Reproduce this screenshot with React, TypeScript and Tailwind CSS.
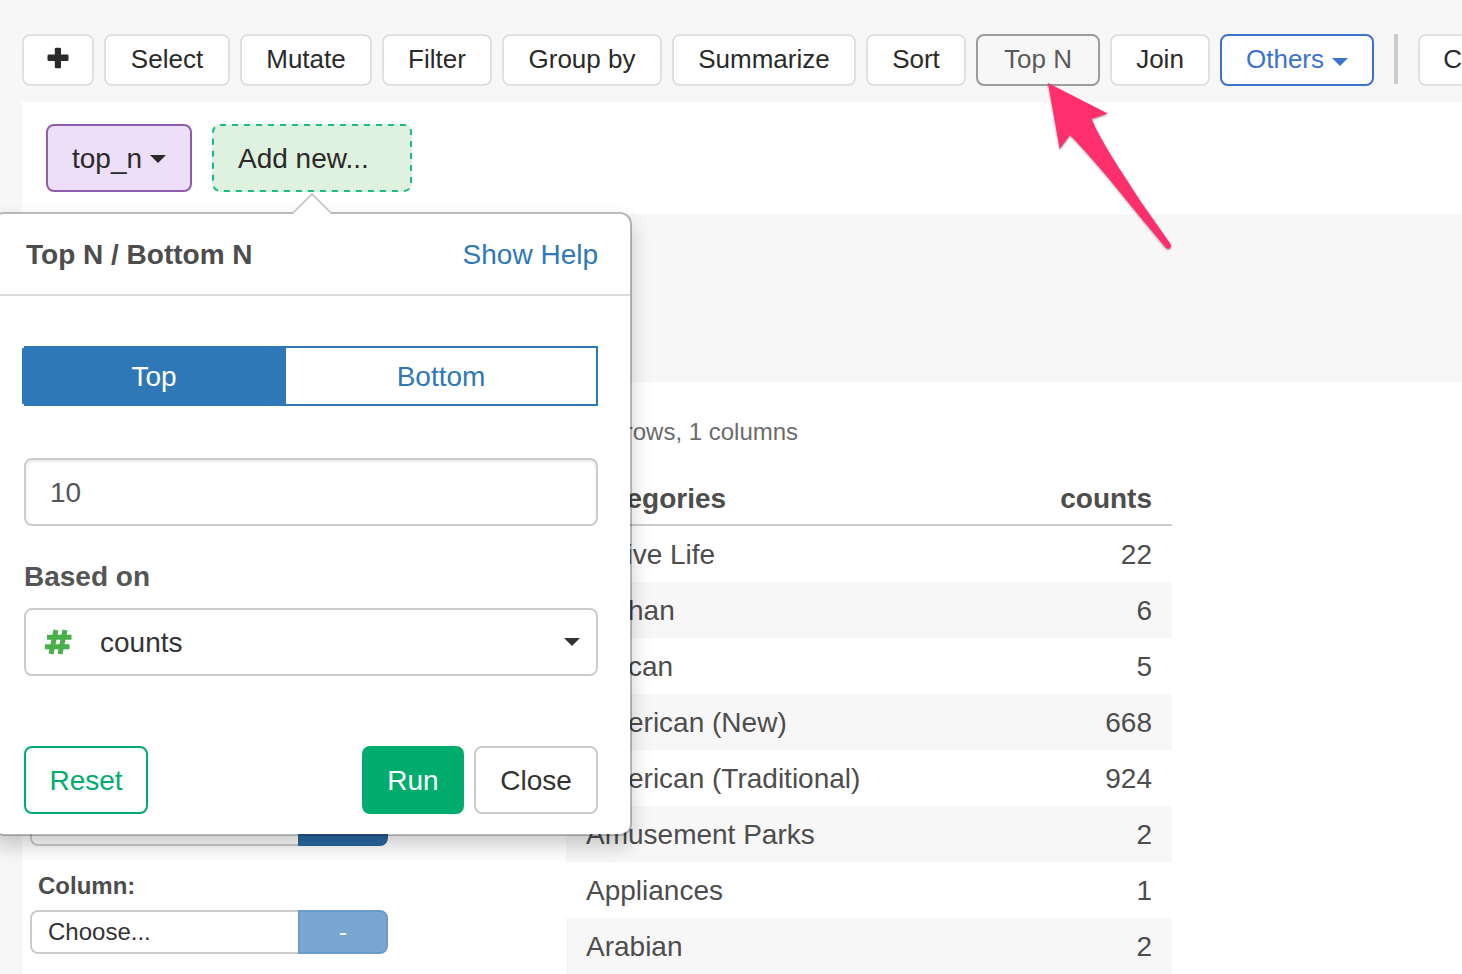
import type { ReactNode } from "react";

function Caret({ className = "" }: { className?: string }) {
  return (
    <svg viewBox="0 0 16 8" className={`h-2 w-4 shrink-0 ${className}`} aria-hidden="true">
      <path d="M0 0h16L8 8z" fill="currentColor" />
    </svg>
  );
}

function PlusIcon() {
  return (
    <svg viewBox="0 0 22 22" className="mb-0.5 h-[22px] w-[22px]" aria-hidden="true">
      <rect x="0.5" y="7.6" width="21" height="6.4" rx="1.2" fill="currentColor" />
      <rect x="7.8" y="0.8" width="6.2" height="20.4" rx="1.2" fill="currentColor" />
    </svg>
  );
}

function HashIcon() {
  return (
    <svg
      viewBox="0 0 28 26"
      className="pointer-events-none absolute top-[21px] left-5 h-[26px] w-7 text-[#47b04b]"
      aria-hidden="true"
    >
      <path
        d="M12 1L7 25M21 1L16 25M3 8.200H27.500M1 17.800H25.500"
        fill="none"
        stroke="currentColor"
        strokeWidth="5"
      />
    </svg>
  );
}

function Arrow() {
  return (
    <svg
      viewBox="0 0 130 172"
      className="pointer-events-none absolute top-12 left-[70px] z-20 h-[172px] w-[130px] overflow-visible drop-shadow-[0_1px_1px_rgba(0,0,0,0.4)]"
      aria-hidden="true"
    >
      <path
        d="M2 1L61.700 31.500L45.700 37C50 49 66 75 75 89L94 118.500L124.500 162C126.500 165.500 122.500 168.500 119.500 165.500L90.500 130.500L60.700 94C46 77 34 63 24 53.300L13.700 67Z"
        fill="#ff2e6c"
      />
    </svg>
  );
}

const toolBase =
  "flex h-[52px] shrink-0 items-center justify-center rounded-lg border-2 pb-0.5 text-[26px] leading-8";
const toolPlain = "border-[#e0e0e0] bg-white text-[#2a2a2a]";

function Tool({ width, children }: { width: string; children: ReactNode }) {
  return (
    <button type="button" className={`${toolBase} ${toolPlain} ${width}`}>
      {children}
    </button>
  );
}

function Toolbar() {
  return (
    <div className="flex gap-2.5 pt-[34px] pb-4 pl-[22px]">
      <button type="button" aria-label="Add step" className={`${toolBase} ${toolPlain} w-[72px]`}>
        <PlusIcon />
      </button>
      <Tool width="w-[126px]">Select</Tool>
      <Tool width="w-[132px]">Mutate</Tool>
      <Tool width="w-[110px]">Filter</Tool>
      <Tool width="w-[160px]">Group by</Tool>
      <Tool width="w-[184px]">Summarize</Tool>
      <Tool width="w-[100px]">Sort</Tool>
      <div className="relative shrink-0">
        <button type="button" className={`${toolBase} w-[124px] border-[#9b9b9b] bg-[#f7f7f7] text-[#5a5a5a]`}>
          Top N
        </button>
        <Arrow />
      </div>
      <Tool width="w-[100px]">Join</Tool>
      <button type="button" className={`${toolBase} w-[154px] gap-2 border-[#3c71d0] bg-white text-[#3c71d0]`}>
        Others
        <Caret className="mt-1.5" />
      </button>
      <div className="mx-2.5 h-[50px] w-1 shrink-0 bg-[#cccccc]" />
      <Tool width="w-[140px]">Custom</Tool>
    </div>
  );
}

function Popover() {
  return (
    <div className="absolute top-[88px] left-1/2 z-10 w-[640px] -translate-x-1/2 rounded-xl border-2 border-black/25 bg-white bg-clip-padding text-[28px] leading-10 shadow-[0_10px_20px_rgba(0,0,0,0.2)]">
      <svg viewBox="0 0 42 22" className="absolute -top-[21px] left-1/2 h-[22px] w-[42px] -translate-x-1/2" aria-hidden="true">
        <path d="M0 22L21 1L42 22Z" fill="#fff" />
        <path d="M1 21L21 1L41 21" fill="none" stroke="#bcbcbc" strokeWidth="1.5" />
      </svg>
      <div className="flex items-center justify-between border-b-2 border-[#dddddd] px-8 pt-[21px] pb-[19px]">
        <h2 className="font-bold text-[#4d4d4d]">Top N / Bottom N</h2>
        <a href="#help" className="text-[#2f78b7]">
          Show Help
        </a>
      </div>
      <form className="pt-[50px] pr-8 pb-5 pl-[30px]" onSubmit={(e) => e.preventDefault()}>
        <div className="flex h-[60px] border-2 border-[#2f78b7]">
          <button type="button" className="-ml-1 w-[264px] bg-[#2f78b7] pt-0.5 text-white">
            Top
          </button>
          <button type="button" className="flex-1 pt-0.5 text-[#2f78b7]">
            Bottom
          </button>
        </div>
        <input
          aria-label="Number of rows"
          defaultValue="10"
          className="mt-[52px] block h-[68px] w-full rounded-lg border-2 border-[#cccccc] px-6 pt-0.5 text-[#555555] shadow-[inset_0_2px_3px_rgba(0,0,0,0.08)]"
        />
        <label htmlFor="based-on" className="mt-[31px] block font-bold text-[#555555]">
          Based on
        </label>
        <div className="relative mt-[11px]">
          <HashIcon />
          <select
            id="based-on"
            className="block h-[68px] w-full appearance-none rounded-lg border-2 border-[#cccccc] bg-white pt-0.5 pl-[74px] text-[#333333]"
          >
            <option>counts</option>
          </select>
          <Caret className="pointer-events-none absolute top-[30px] right-[18px] text-[#333333]" />
        </div>
        <div className="mt-[70px] flex h-[68px] gap-2.5">
          <button type="button" className="mr-auto w-[124px] rounded-lg border-2 border-[#00ad6e] pt-0.5 text-[#00ad6e]">
            Reset
          </button>
          <button type="submit" className="w-[102px] rounded-lg bg-[#00ad6e] pt-0.5 text-white">
            Run
          </button>
          <button type="button" className="w-[124px] rounded-lg border-2 border-[#cccccc] pt-0.5 text-[#333333]">
            Close
          </button>
        </div>
      </form>
    </div>
  );
}

function Steps() {
  return (
    <div className="ml-[22px] flex gap-5 bg-white px-6 py-[22px] text-[28px] leading-10 text-[#2a2a2a]">
      <button
        type="button"
        className="flex h-[68px] w-[146px] items-center justify-center gap-2 rounded-lg border-2 border-[#8e5db0] bg-[#eddff7] pt-0.5"
      >
        top_n
        <Caret />
      </button>
      <div className="relative">
        <button type="button" className="relative h-[68px] w-[200px] rounded-lg bg-[#dff2df] pt-0.5 pl-[26px] text-left">
          Add new...
          <svg
            className="absolute inset-px h-[calc(100%-2px)] w-[calc(100%-2px)] overflow-visible"
            aria-hidden="true"
          >
            <rect
              width="100%"
              height="100%"
              rx="7"
              fill="none"
              stroke="#1abb84"
              strokeWidth="2"
              strokeDasharray="6 6"
            />
          </svg>
        </button>
        <Popover />
      </div>
    </div>
  );
}

function ColumnPicker({ label, action, tone }: { label: ReactNode; action: string; tone: string }) {
  return (
    <div>
      {label}
      <div className="flex h-11 w-[358px]">
        <select
          id={action === "-" ? "column" : undefined}
          aria-label={label ? undefined : "First column"}
          className="min-w-0 flex-1 appearance-none rounded-l-lg border-2 border-r-0 border-[#cccccc] bg-white px-4 text-[#333333]"
        >
          {label ? <option>Choose...</option> : <option></option>}
        </select>
        <button
          type="button"
          aria-label={action === "-" ? undefined : "Add column"}
          className={`w-[90px] rounded-r-lg border-2 text-white ${tone}`}
        >
          {action}
        </button>
      </div>
    </div>
  );
}

const rows: [string, number][] = [
  ["Active Life", 22],
  ["Afghan", 6],
  ["African", 5],
  ["American (New)", 668],
  ["American (Traditional)", 924],
  ["Amusement Parks", 2],
  ["Appliances", 1],
  ["Arabian", 2],
];

function Results() {
  return (
    <section className="w-[606px] shrink-0 pt-[34px] text-[#4d4d4d]">
      <p className="px-3 text-2xl leading-8 text-[#6b6b6b]">147 rows, 1 columns</p>
      <table className="mt-6 w-full border-separate border-spacing-0 text-[28px] leading-10">
        <thead>
          <tr>
            <th className="h-[54px] border-b-2 border-[#cccccc] px-5 pt-0.5 text-left font-bold">categories</th>
            <th className="h-[54px] border-b-2 border-[#cccccc] px-5 pt-0.5 text-right font-bold">counts</th>
          </tr>
        </thead>
        <tbody>
          {rows.map(([name, count]) => (
            <tr key={name} className="even:bg-[#f7f7f7]">
              <td className="h-14 px-5 pt-0.5">{name}</td>
              <td className="h-14 px-5 pt-0.5 text-right">{count}</td>
            </tr>
          ))}
        </tbody>
      </table>
    </section>
  );
}

export default function App() {
  return (
    <div className="flex h-screen flex-col overflow-hidden bg-[#f7f7f7] font-['Liberation_Sans',Arial,sans-serif]">
      <Toolbar />
      <Steps />
      <div className="h-[168px] shrink-0" />
      <main className="ml-[22px] flex flex-1 bg-white">
        <aside className="flex w-[544px] shrink-0 flex-col gap-6 px-2 pt-[420px] text-2xl leading-8">
          <ColumnPicker label={null} action="" tone="border-[#2a67a0] bg-[#2968a5]" />
          <ColumnPicker
            label={
              <label htmlFor="column" className="block px-2 pb-2 font-bold text-[#4d4d4d]">
                Column:
              </label>
            }
            action="-"
            tone="border-[#6b9bc9] bg-[#7aa7d2]"
          />
        </aside>
        <Results />
      </main>
    </div>
  );
}
